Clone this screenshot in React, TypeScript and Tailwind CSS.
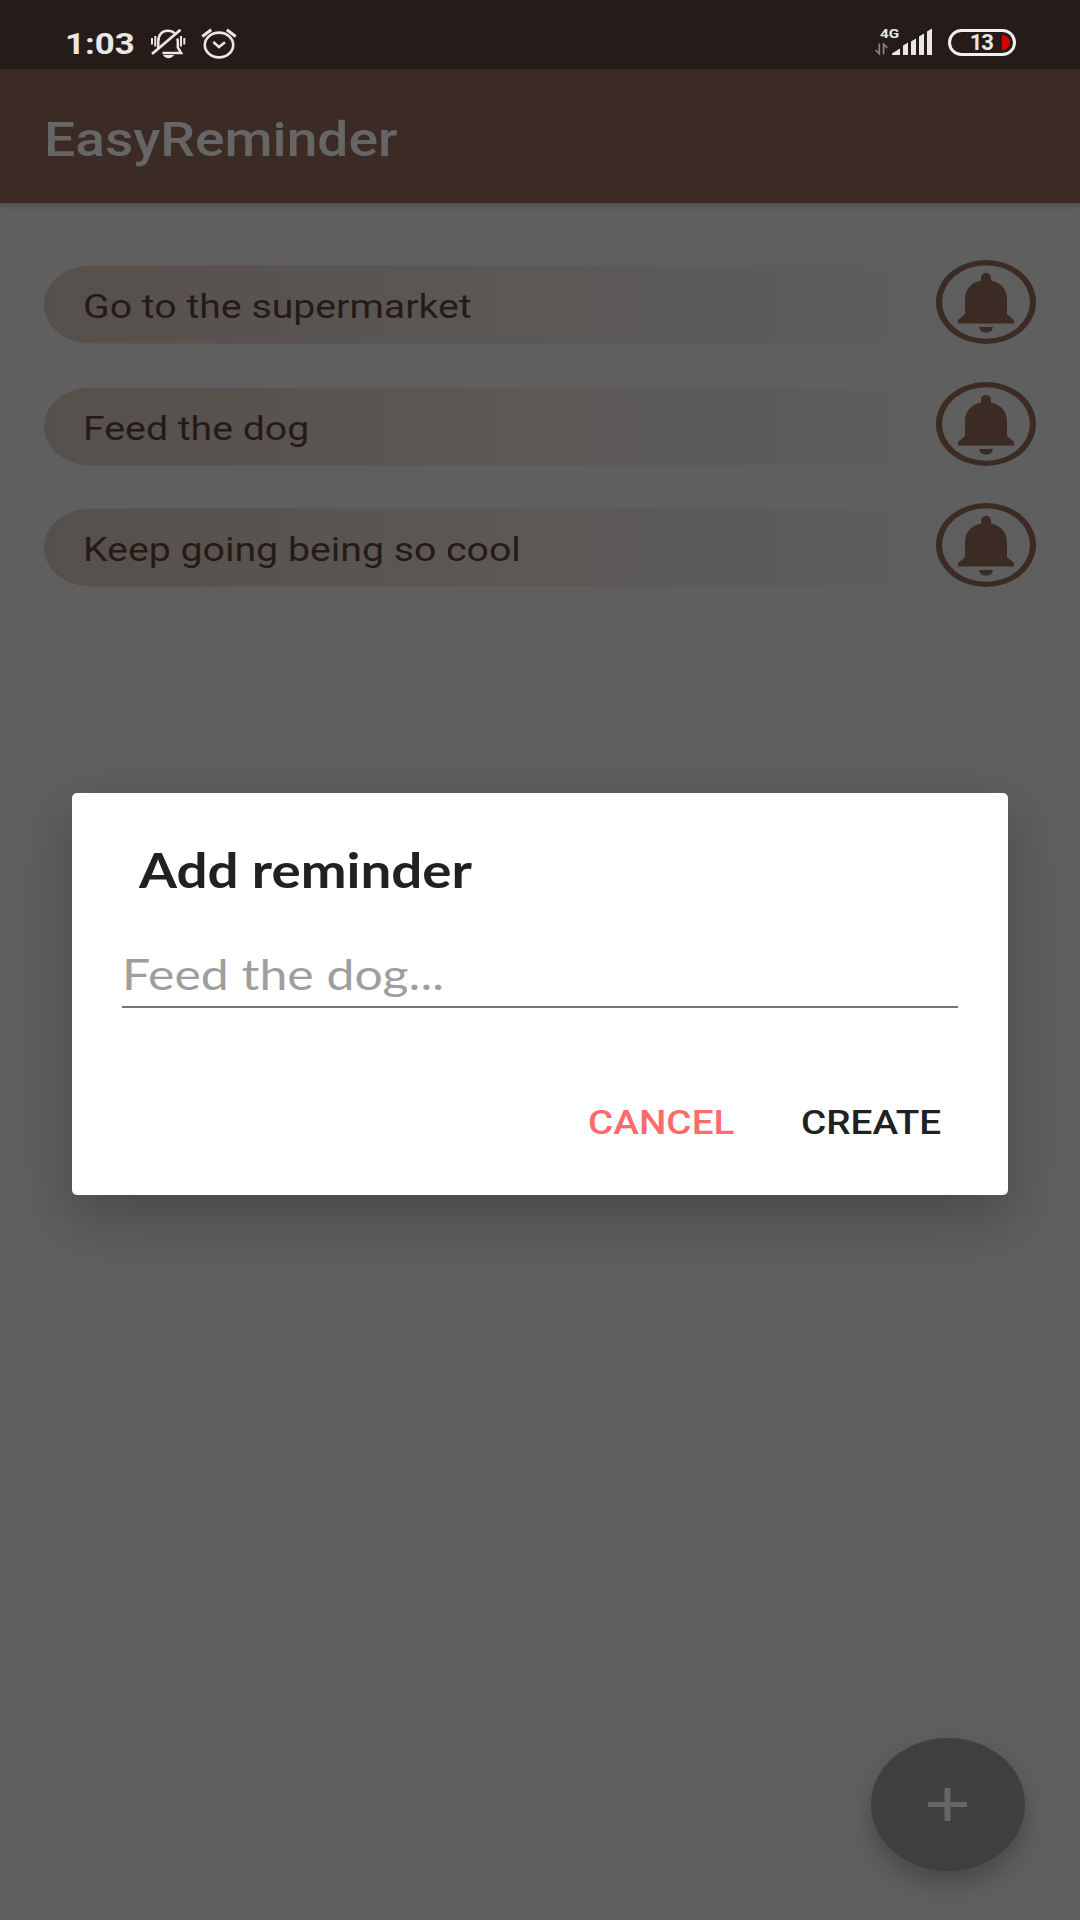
import React from "react";

const reminders = ["Go to the supermarket", "Feed the dog", "Keep going being so cool"];

function MutedBellIcon() {
  return (
    <svg width="36" height="32" viewBox="0 0 36 32" fill="none" stroke="#ebe7e4" strokeWidth="2.5">
      <path d="M8.3 20.5V13C8.3 7 12 2.800 17.800 2.800c2.800 0 5.400 1 7 2.600M27.300 10.500c.4 1 .5 2 .5 3.200v5.800l3.300 5.600H12.500" />
      <path d="M2 26 30.500 1.800" strokeWidth="2.800" />
      <path d="M2 10v6.500M5.300 8v10.500M31 8v10.500M34.300 10v6.500" strokeWidth="2" />
      <path d="M13 27h11c-1 2-3 3.200-5.500 3.200S14 29 13 27z" fill="#ebe7e4" stroke="none" />
    </svg>
  );
}

function AlarmIcon() {
  return (
    <svg width="36" height="32" viewBox="0 0 36 32" fill="none" stroke="#ebe7e4">
      <ellipse cx="18" cy="17" rx="14.200" ry="12.400" strokeWidth="2.600" />
      <path d="M12.300 14 18 19l6-4.800" strokeWidth="2.500" />
      <path d="M1.300 8.500 10.200 1.700M34.700 8.500 25.800 1.700" strokeWidth="3" />
    </svg>
  );
}

function SignalIcon() {
  return (
    <svg width="58" height="28" viewBox="0 0 58 28">
      <g fill="#ebe7e4">
        <path d="M17 27v-1.600l8-5V27zM28 27V17.500l5-3V27zM36 27V13.500l5-3V27zM44 27V8.500l5-3V27zM52 27V3.500l5-3V27z" />
      </g>
      <path d="M4.300 15.500v10.300L.6 22.200M8.600 26.500V16.200l3.700 3.600" fill="none" stroke="#8b8480" strokeWidth="1.700" />
    </svg>
  );
}

function BellBadge() {
  return (
    <svg width="100" height="84" viewBox="0 0 100 84" fill="#3c2b25" className="relative shrink-0">
      <path
        fillRule="evenodd"
        d="M0 42a50 42 0 1 0 100 0a50 42 0 1 0-100 0zM6 42a44 36.800 0 1 1 88 0a44 36.800 0 1 1-88 0z"
      />
      <path d="M45 20.600V17.500a5 4.500 0 0 1 10 0v3.100C64.500 22.300 71 29.500 71 39v15l7 6v3.500H22V60l7-6V39C29 29.500 35.500 22.300 45 20.600z" />
      <path d="M43 67h14c-.5 3.500-3.200 5.700-7 5.700s-6.500-2.200-7-5.700z" />
    </svg>
  );
}

function StatusBar() {
  return (
    <div className="flex h-[69px] justify-between bg-[#251b18] pl-[65px] pr-[64px] text-[#ebe7e4]">
      <div className="flex">
        <div className="mt-[15px] w-[85px] text-[30px] leading-[58px] font-bold">
          <span className="inline-block origin-left scale-x-[1.16]">1:03</span>
        </div>
        <div className="mt-[28px] flex gap-[15px]">
          <MutedBellIcon />
          <AlarmIcon />
        </div>
      </div>
      <div className="flex">
        <div className="relative mt-[28px] mr-[15px] h-[28px] w-[58px]">
          <SignalIcon />
          <span className="absolute top-[-3px] left-[5px] origin-left scale-x-[1.13] text-[13.500px] leading-[16px] font-bold">4G</span>
        </div>
        <div className="mt-[29px] flex h-[27px] w-[68px] items-center justify-end rounded-full border-[3px] border-[#f3efed] pr-[3px]">
          <span className="mr-[9px] inline-block origin-right text-[22px] leading-[22px] font-bold tracking-[-1px]">13</span>
          <span className="h-[15px] w-[8px] rounded-r-full bg-[#d80000]" />
        </div>
      </div>
    </div>
  );
}

function ReminderRow({ text }: { text: string }) {
  return (
    <li className="flex h-[84px] items-center">
      <div className="mr-[-50px] h-[78px] flex-1 translate-y-[2.500px] rounded-[46px_0_0_46px/39px_0_0_39px] bg-linear-to-r from-[#56504c] to-[#5f5f5f] pl-[39px] text-[34px] leading-[78px] text-[#261a17]">
        <span className="inline-block origin-left translate-y-[1px] scale-x-[1.154] whitespace-nowrap">{text}</span>
      </div>
      <BellBadge />
    </li>
  );
}

function AddReminderDialog() {
  return (
    <div className="absolute inset-x-0 top-[793px] px-[72px]">
      <div className="flex h-[402px] flex-col rounded-[5px] bg-white px-[50px] pt-[47px] shadow-[0_22px_56px_rgba(0,0,0,0.24)]">
        <h2 className="pl-[17px] font-[Lato,sans-serif] text-[47.500px] leading-[60px] font-bold text-[#212121]">
          <span className="inline-block origin-left scale-x-[1.152]">Add reminder</span>
        </h2>
        <div className="mt-[48px] border-b-2 border-[#757575] pb-[6px] font-[Lato,sans-serif] text-[42.500px] leading-[52px] text-[#9e9e9e]">
          <span className="inline-block origin-left scale-x-[1.175]">Feed the dog...</span>
        </div>
        <div className="mt-[94px] flex text-[34px] leading-[40px] font-medium">
          <button className="ml-[466px] w-[213px] text-left text-[#ff6b6b]">
            <span className="inline-block origin-left scale-x-[1.138]">CANCEL</span>
          </button>
          <button className="text-left text-[#212121]">
            <span className="inline-block origin-left scale-x-[1.138]">CREATE</span>
          </button>
        </div>
      </div>
    </div>
  );
}

export default function App() {
  return (
    <main className="relative flex h-[1920px] w-[1080px] flex-col overflow-hidden bg-[#5f5f5f] font-[Roboto,sans-serif]">
      <StatusBar />
      <header className="h-[134px] shrink-0 bg-[#3c2b25] pt-[4px] pl-[44px] text-[48px] leading-[134px] font-medium text-[#666666] shadow-[0_2px_6px_rgba(0,0,0,0.25)]">
        <h1 className="inline-block origin-left scale-x-[1.149]">EasyReminder</h1>
      </header>
      <ul className="flex flex-col gap-[37.600px] pt-[57px] pr-[44px] pl-[44px]">
        {reminders.map((text) => (
          <ReminderRow key={text} text={text} />
        ))}
      </ul>
      <AddReminderDialog />
      <button
        aria-label="Add reminder"
        className="absolute top-[1738px] left-[871px] flex h-[133px] w-[154px] items-center justify-center rounded-[50%] bg-[#3f3f3f] shadow-[0_12px_24px_rgba(0,0,0,0.25)]"
      >
        <svg width="39" height="33" viewBox="0 0 39 33" fill="#666666" className="-translate-x-px">
          <path d="M16.500 0h6v14H39v5H22.500v14h-6V19H0v-5h16.500z" />
        </svg>
      </button>
    </main>
  );
}
